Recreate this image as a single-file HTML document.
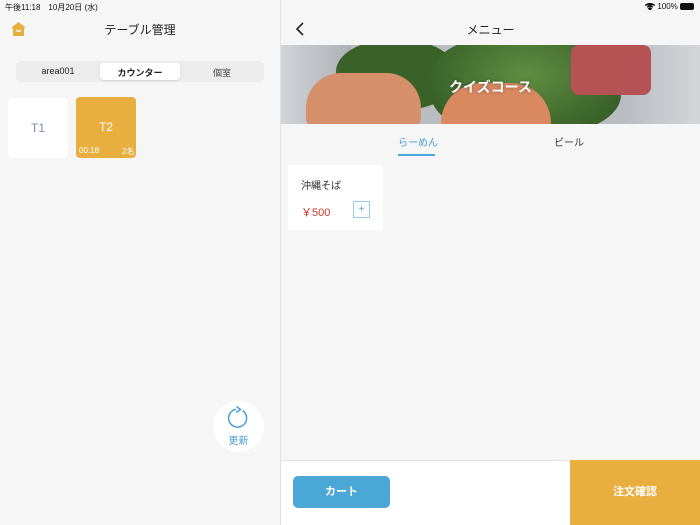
<!DOCTYPE html>
<html><head><meta charset="utf-8"><style>
*{margin:0;padding:0;box-sizing:border-box}
body{width:700px;height:525px;background:#f6f6f6;font-family:"Liberation Sans","Noto Sans CJK JP",sans-serif;position:relative;overflow:hidden;color:#333}
.a{position:absolute}
</style></head><body>
<div class="a" style="left:5px;top:2px;font-size:8px;color:#111">午後11:18　10月20日 (水)</div>
<div class="a" style="right:6px;top:2px;font-size:8px;color:#111">
<svg width="10" height="7" viewBox="0 0 10 7" style="vertical-align:-1px"><path d="M0 2.5Q5 -1.5 10 2.5M2 4.2Q5 2 8 4.2M5 7L3.6 5.6Q5 4.6 6.4 5.6Z" stroke="#111" stroke-width="1.2" fill="#111"/></svg> 100% <span style="display:inline-block;width:14px;height:7px;background:#111;border-radius:2px;vertical-align:-1px"></span></div>
<!-- left -->
<svg class="a" style="left:11px;top:22px" width="15" height="14" viewBox="0 0 15 14"><path d="M7.5 0L15 6H13V14H2V6H0Z" fill="#e8ad3f"/><path d="M5 8Q7.5 10.5 10 8" stroke="#fff" stroke-width="1.3" fill="none"/></svg>
<div class="a" style="left:0;width:280px;top:21px;text-align:center;font-size:12px;color:#222">テーブル管理</div>
<div class="a" style="left:16px;top:61px;width:248px;height:21px;background:#ececec;border-radius:5px"></div>
<div class="a" style="left:100px;top:63px;width:80px;height:17px;background:#fff;border-radius:4px;box-shadow:0 1px 2px rgba(0,0,0,.1)"></div>
<div class="a" style="left:16px;top:66px;width:84px;text-align:center;font-size:9px;color:#222">area001</div>
<div class="a" style="left:100px;top:66px;width:80px;text-align:center;font-size:9px;color:#222;font-weight:bold">カウンター</div>
<div class="a" style="left:180px;top:66px;width:84px;text-align:center;font-size:9px;color:#444">個室</div>
<div class="a" style="left:8px;top:98px;width:60px;height:60px;background:#fff;border-radius:4px;text-align:center;line-height:60px;font-size:12px;color:#7a8aa8">T1</div>
<div class="a" style="left:76px;top:97px;width:60px;height:61px;background:#e8ae40;border-radius:4px;text-align:center;line-height:61px;font-size:12px;color:#fff">T2</div>
<div class="a" style="left:79px;top:146px;font-size:8px;color:#fff">00:18</div>
<div class="a" style="left:122px;top:146px;font-size:8px;color:#fff">2名</div>
<div class="a" style="left:213px;top:401px;width:51px;height:51px;background:#fff;border-radius:50%"></div>
<svg class="a" style="left:226px;top:406px" width="24" height="24" viewBox="0 0 24 24"><path d="M16.5 4.5A9 9 0 1 1 10 3.2" stroke="#4a9fd3" stroke-width="1.5" fill="none"/><path d="M10.5 0.5L14.5 3.5L10 6.5" stroke="#4a9fd3" stroke-width="1.5" fill="none"/></svg>
<div class="a" style="left:213px;top:432px;width:51px;text-align:center;font-size:10px;color:#4a9fd3">更新</div>
<div class="a" style="left:280px;top:0;width:1px;height:525px;background:#e2e2e2"></div>
<!-- right -->
<svg class="a" style="left:295px;top:22px" width="10" height="14" viewBox="0 0 10 14"><path d="M8 1L2 7L8 13" stroke="#222" stroke-width="1.6" fill="none"/></svg>
<div class="a" style="left:281px;width:419px;top:21px;text-align:center;font-size:12px;color:#222">メニュー</div>
<div class="a" style="left:281px;top:45px;width:419px;height:79px;overflow:hidden;background:#c9ccd1">
<div class="a" style="left:0;top:0;width:70px;height:79px;background:linear-gradient(90deg,#e4e6ea,#bcc1c7)"></div>
<div class="a" style="left:340px;top:0;width:79px;height:79px;background:linear-gradient(90deg,#c8ccd2,#e6e8eb)"></div>
<div class="a" style="left:55px;top:-5px;width:120px;height:70px;background:#3e6a2c;border-radius:45%"></div>
<div class="a" style="left:150px;top:-10px;width:190px;height:100px;background:radial-gradient(ellipse at 50% 40%,#6a9a48,#2f5a22);border-radius:40%"></div>
<div class="a" style="left:290px;top:0;width:80px;height:50px;background:#c45a5c;border-radius:8px"></div>
<div class="a" style="left:25px;top:28px;width:115px;height:55px;background:#e99c75;border-radius:35px 35px 10px 10px"></div>
<div class="a" style="left:160px;top:38px;width:110px;height:45px;background:#ec9469;border-radius:40px 40px 0 0"></div>
<div class="a" style="left:0;top:0;width:419px;height:79px;background:rgba(0,0,0,.08)"></div>
<div class="a" style="left:0;width:419px;top:32px;text-align:center;font-size:14px;color:#fff;font-weight:bold;text-shadow:0 0 3px rgba(0,0,0,.4)">クイズコース</div>
</div>
<div class="a" style="left:398px;top:134px;font-size:10px;color:#4a9fd3">らーめん</div>
<div class="a" style="left:398px;top:154px;width:37px;height:2px;background:#4aa7db"></div>
<div class="a" style="left:554px;top:134px;font-size:10px;color:#333">ビール</div>
<div class="a" style="left:288px;top:165px;width:95px;height:65px;background:#fff"></div>
<div class="a" style="left:301px;top:177px;font-size:10px;color:#333">沖縄そば</div>
<div class="a" style="left:301px;top:204px;font-size:11px;color:#c8372d">￥500</div>
<div class="a" style="left:353px;top:201px;width:17px;height:17px;border:1px solid #9cc9e6;text-align:center;line-height:15px;font-size:10px;color:#4a9fd3">+</div>
<div class="a" style="left:281px;top:460px;width:419px;height:65px;background:#fff;border-top:1px solid #e4e4e4"></div>
<div class="a" style="left:570px;top:460px;width:130px;height:65px;background:#e8ae40;text-align:center;line-height:65px;font-size:11px;color:#fff;font-weight:bold">注文確認</div>
<div class="a" style="left:293px;top:476px;width:97px;height:32px;background:#4aa7d6;border-radius:5px;text-align:center;line-height:32px;font-size:11px;color:#fff;font-weight:bold">カート</div>
</body></html>
